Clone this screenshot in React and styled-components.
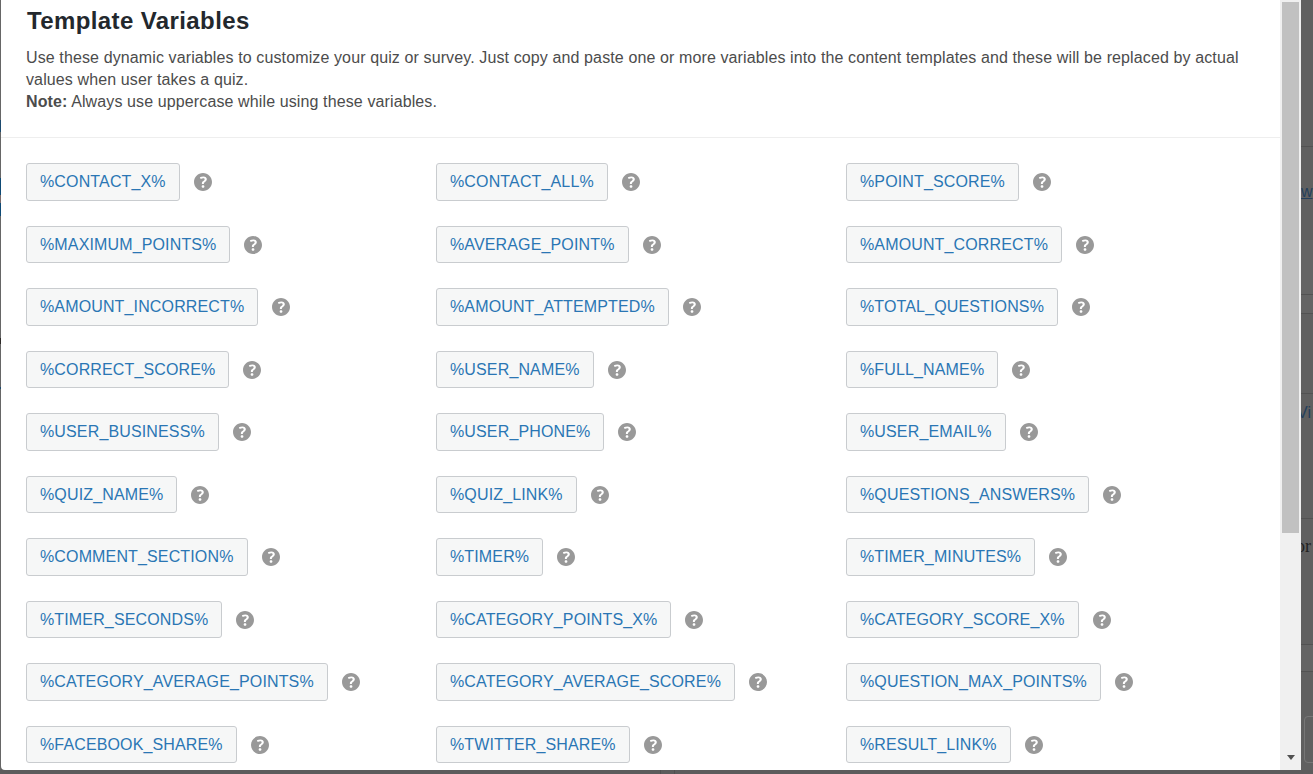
import React from 'react';
import styled, {createGlobalStyle} from 'styled-components';

const GlobalStyle = createGlobalStyle`
    html, body {
        margin: 0;
        padding: 0;
        height: 100%;
        overflow: hidden;
        background: #5f5f5f;
        font-family: "Liberation Sans", Arial, sans-serif;
    }
`

const Page = styled.div`
    display: grid;
    grid-template-columns: 1px 1300px 12px;
    grid-template-rows: 770px 4px;
    width: 1313px;
    height: 774px;
    background: #5f5f5f;
`

// what shows of the page behind the modal
const LeftStrip = styled.div`
    display: flex;
    flex-direction: column;
    overflow: hidden;
`
const LeftBit = styled.div`
    height: ${props => props.$h}px;
    flex: none;
    background: ${props => props.$color || '#666'};
`
const RightStrip = styled.div`
    display: flex;
    flex-direction: column;
    overflow: hidden;
    background: #606060;
`
const Band = styled.div`
    height: ${props => props.$h}px;
    flex: none;
    overflow: hidden;
    white-space: nowrap;
    background: ${props => props.$bg || 'transparent'};
    border-bottom: ${props => props.$line ? '1px solid #525252' : '0'};
`
const BehindLink = styled.span`
    display: inline-block;
    margin-top: ${props => props.$top}px;
    margin-left: ${props => props.$left || 0}px;
    font-size: 16px;
    line-height: 18px;
    color: #243f5c;
    text-decoration: ${props => props.$under ? 'underline' : 'none'};
`
const BehindSerif = styled(BehindLink)`
    font-family: "Liberation Serif", serif;
    font-size: 18px;
    color: #222;
`
const BehindBox = styled.div`
    width: 20px;
    height: 47px;
    margin-left: 3px;
    box-sizing: border-box;
    border: 1px solid #777;
    border-radius: 4px;
`
const BottomStrip = styled.div`
    grid-column: 1 / 4;
    display: flex;
    background: #5c5c5c;
`
const BottomGap = styled.div`
    width: ${props => props.$w}px;
    flex: none;
    border-right: ${props => props.$line ? '1px solid #505050' : '0'};
`

const Modal = styled.div`
    display: flex;
    height: 770px;
    background: #fff;
    border-bottom-left-radius: 4px;
    overflow: hidden;
`
const Content = styled.div`
    width: 1279px;
    flex: none;
    overflow: hidden;
`
const Header = styled.div`
    padding: 0 25px 25px;
    border-bottom: 1px solid #eee;
`
const Title = styled.h2`
    margin: 0;
    height: 47px;
    padding: 6px 0 0 1px;
    box-sizing: border-box;
    font-size: 24px;
    line-height: 30px;
    font-weight: 700;
    letter-spacing: 0.39px;
    color: #23282d;
`
const Description = styled.p`
    margin: 0 0 -1px;
    font-size: 16px;
    line-height: 22px;
    letter-spacing: 0.116px;
    color: #4c4c4c;
`
const VariableGrid = styled.div`
    display: grid;
    grid-template-columns: repeat(3, 410px);
    grid-auto-rows: 37.5px;
    row-gap: 25px;
    padding: 25px 0 0 25px;
`
const Variable = styled.div`
    display: flex;
    align-items: center;
    gap: 14px;
`
const Chip = styled.code`
    display: block;
    box-sizing: border-box;
    height: 37.5px;
    padding: 0 13px;
    background: #f6f7f7;
    border: 1px solid #c9cccf;
    border-radius: 3px;
    font-family: "Liberation Sans", Arial, sans-serif;
    font-size: 16px;
    line-height: 36px;
    letter-spacing: 0.14px;
    color: #2a76b4;
`
const HelpSvg = styled.svg`
    width: 18px;
    height: 18px;
    flex: none;
    margin-top: 1px;
    fill: #999;
`

const ScrollTrack = styled.div`
    width: 21px;
    flex: none;
    padding: 2px 2px 0;
    box-sizing: border-box;
    background: #f0f0f0;
    display: flex;
    flex-direction: column;
    align-items: center;
`
const ScrollThumb = styled.div`
    width: 17px;
    height: 531px;
    background: #c1c1c1;
`
const ScrollArrow = styled.div`
    margin-top: 222px;
    width: 0;
    height: 0;
    border-left: 4px solid transparent;
    border-right: 4px solid transparent;
    border-top: 5px solid #505050;
`

const HelpIcon = () => (
    <HelpSvg viewBox="3 3 14 14">
        <path d="M17 10c0-3.87-3.14-7-7-7-3.87 0-7 3.13-7 7 0 3.86 3.13 7 7 7 3.86 0 7-3.14 7-7zm-6.3 1.48H9.14v-.43c0-.38.08-.7.24-.98s.46-.57.88-.89c.41-.29.68-.53.81-.71.14-.18.2-.39.2-.62 0-.25-.09-.44-.28-.58-.19-.13-.45-.19-.79-.19-.58 0-1.25.19-2 .57l-.64-1.28c.87-.49 1.8-.74 2.77-.74.81 0 1.45.2 1.92.58.48.39.71.91.71 1.55 0 .43-.09.8-.29 1.11-.19.32-.57.67-1.11 1.06-.38.28-.61.49-.71.63-.1.15-.15.34-.15.57v.35zm-1.47 2.74c-.18-.18-.27-.43-.27-.76 0-.33.09-.58.27-.76.19-.17.45-.26.8-.26.34 0 .6.09.79.26.18.18.27.43.27.76 0 .32-.09.57-.27.75-.19.18-.45.27-.79.27-.35 0-.61-.09-.8-.26z" />
    </HelpSvg>
)

const variables = [
    '%CONTACT_X%', '%CONTACT_ALL%', '%POINT_SCORE%',
    '%MAXIMUM_POINTS%', '%AVERAGE_POINT%', '%AMOUNT_CORRECT%',
    '%AMOUNT_INCORRECT%', '%AMOUNT_ATTEMPTED%', '%TOTAL_QUESTIONS%',
    '%CORRECT_SCORE%', '%USER_NAME%', '%FULL_NAME%',
    '%USER_BUSINESS%', '%USER_PHONE%', '%USER_EMAIL%',
    '%QUIZ_NAME%', '%QUIZ_LINK%', '%QUESTIONS_ANSWERS%',
    '%COMMENT_SECTION%', '%TIMER%', '%TIMER_MINUTES%',
    '%TIMER_SECONDS%', '%CATEGORY_POINTS_X%', '%CATEGORY_SCORE_X%',
    '%CATEGORY_AVERAGE_POINTS%', '%CATEGORY_AVERAGE_SCORE%', '%QUESTION_MAX_POINTS%',
    '%FACEBOOK_SHARE%', '%TWITTER_SHARE%', '%RESULT_LINK%',
]

const App = () => {
    return (
        <Page>
            <GlobalStyle />
            <LeftStrip>
                <LeftBit $h={120} />
                <LeftBit $h={12} $color="#1d4a6e" />
                <LeftBit $h={46} />
                <LeftBit $h={17} $color="#0e4a75" />
                <LeftBit $h={8} $color="#7a6a6a" />
                <LeftBit $h={13} $color="#0e4a75" />
                <LeftBit $h={122} />
                <LeftBit $h={6} $color="#2d2a28" />
                <LeftBit $h={43} />
                <LeftBit $h={2} $color="#1d4a6e" />
                <LeftBit $h={381} />
            </LeftStrip>
            <Modal>
                <Content>
                    <Header>
                        <Title>Template Variables</Title>
                        <Description>
                            Use these dynamic variables to customize your quiz or survey. Just copy and paste one or more variables into the content templates and these will be replaced by actual values when user takes a quiz.
                            <br />
                            <strong>Note:</strong> Always use uppercase while using these variables.
                        </Description>
                    </Header>
                    <VariableGrid>
                        {variables.map((name) => (
                            <Variable key={name}>
                                <Chip>{name}</Chip>
                                <HelpIcon />
                            </Variable>
                        ))}
                    </VariableGrid>
                </Content>
                <ScrollTrack>
                    <ScrollThumb />
                    <ScrollArrow />
                </ScrollTrack>
            </Modal>
            <RightStrip>
                <Band $h={146} $line />
                <Band $h={93}><BehindLink $top={36} $left={0} $under>w</BehindLink></Band>
                <Band $h={54} $bg="#646464" $line />
                <Band $h={18} $bg="#646464" $line />
                <Band $h={79} $line />
                <Band $h={124} $line><BehindLink $top={10} $left={-4}>Vi</BehindLink></Band>
                <Band $h={125} $line><BehindSerif $top={18} $left={-5}>or</BehindSerif></Band>
                <Band $h={26} $bg="#646464" $line />
                <Band $h={44} />
                <BehindBox />
            </RightStrip>
            <BottomStrip>
                <BottomGap $w={660} $line />
                <BottomGap $w={13} $line />
            </BottomStrip>
        </Page>
    )
};

export default App;
